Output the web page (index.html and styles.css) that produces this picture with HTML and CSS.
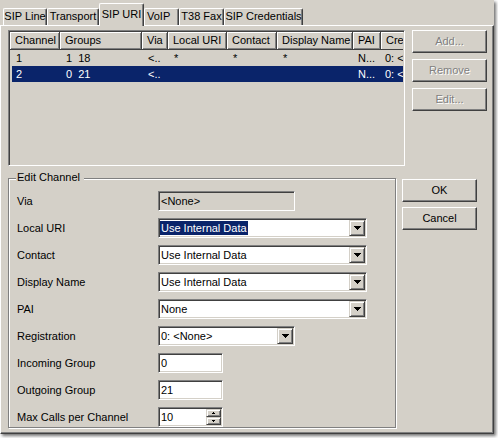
FILE: index.html
```html
<!DOCTYPE html>
<html>
<head>
<meta charset="utf-8">
<link rel="stylesheet" href="styles.css">
</head>
<body>
<div class="window">
  <div class="tabs">
    <div class="tab t1">SIP Line</div>
    <div class="tab t2">Transport</div>
    <div class="tab active t3">SIP URI</div>
    <div class="tab t4">VoIP</div>
    <div class="tab t5">T38 Fax</div>
    <div class="tab t6">SIP Credentials</div>
  </div>
  <div class="panel">
    <div class="top">
      <div class="list">
        <div class="lv-header">
          <div class="hc c1">Channel</div>
          <div class="hc c2">Groups</div>
          <div class="hc c3">Via</div>
          <div class="hc c4">Local URI</div>
          <div class="hc c5">Contact</div>
          <div class="hc c6">Display Name</div>
          <div class="hc c7">PAI</div>
          <div class="hc c8">Cre</div>
        </div>
        <div class="lv-row">
          <div class="rc c1">1</div>
          <div class="rc c2">1  18</div>
          <div class="rc c3">&lt;..</div>
          <div class="rc c4">*</div>
          <div class="rc c5">*</div>
          <div class="rc c6">*</div>
          <div class="rc c7">N...</div>
          <div class="rc c8">0: &lt;</div>
        </div>
        <div class="lv-row sel">
          <div class="rc c1">2</div>
          <div class="rc c2">0  21</div>
          <div class="rc c3">&lt;..</div>
          <div class="rc c4"></div>
          <div class="rc c5"></div>
          <div class="rc c6"></div>
          <div class="rc c7">N...</div>
          <div class="rc c8">0: &lt;</div>
        </div>
      </div>
      <div class="side">
        <div class="btn disabled">Add...</div>
        <div class="btn disabled">Remove</div>
        <div class="btn disabled">Edit...</div>
      </div>
    </div>
    <div class="bottom">
      <div class="group">
        <span class="group-label">Edit Channel</span>
        <div class="form">
          <div class="lbl">Via</div>
          <div class="edit ro w137">&lt;None&gt;</div>

          <div class="lbl">Local URI</div>
          <div class="edit combo w209"><div class="val"><span class="hl">Use Internal Data</span></div><div class="drop"><svg width="7" height="4" viewBox="0 0 7 4" shape-rendering="crispEdges"><rect x="0" y="0" width="7" height="1"/><rect x="1" y="1" width="5" height="1"/><rect x="2" y="2" width="3" height="1"/><rect x="3" y="3" width="1" height="1"/></svg></div></div>

          <div class="lbl">Contact</div>
          <div class="edit combo w209"><div class="val">Use Internal Data</div><div class="drop"><svg width="7" height="4" viewBox="0 0 7 4" shape-rendering="crispEdges"><rect x="0" y="0" width="7" height="1"/><rect x="1" y="1" width="5" height="1"/><rect x="2" y="2" width="3" height="1"/><rect x="3" y="3" width="1" height="1"/></svg></div></div>

          <div class="lbl">Display Name</div>
          <div class="edit combo w209"><div class="val">Use Internal Data</div><div class="drop"><svg width="7" height="4" viewBox="0 0 7 4" shape-rendering="crispEdges"><rect x="0" y="0" width="7" height="1"/><rect x="1" y="1" width="5" height="1"/><rect x="2" y="2" width="3" height="1"/><rect x="3" y="3" width="1" height="1"/></svg></div></div>

          <div class="lbl">PAI</div>
          <div class="edit combo w209"><div class="val">None</div><div class="drop"><svg width="7" height="4" viewBox="0 0 7 4" shape-rendering="crispEdges"><rect x="0" y="0" width="7" height="1"/><rect x="1" y="1" width="5" height="1"/><rect x="2" y="2" width="3" height="1"/><rect x="3" y="3" width="1" height="1"/></svg></div></div>

          <div class="lbl">Registration</div>
          <div class="edit combo w137"><div class="val">0: &lt;None&gt;</div><div class="drop"><svg width="7" height="4" viewBox="0 0 7 4" shape-rendering="crispEdges"><rect x="0" y="0" width="7" height="1"/><rect x="1" y="1" width="5" height="1"/><rect x="2" y="2" width="3" height="1"/><rect x="3" y="3" width="1" height="1"/></svg></div></div>

          <div class="lbl">Incoming Group</div>
          <div class="edit w65">0</div>

          <div class="lbl">Outgoing Group</div>
          <div class="edit w65">21</div>

          <div class="lbl">Max Calls per Channel</div>
          <div class="edit spin w65"><div class="val">10</div><div class="spinbtns"><div class="sb"><svg width="3" height="2" viewBox="0 0 3 2" shape-rendering="crispEdges"><rect x="1" y="0" width="1" height="1"/><rect x="0" y="1" width="3" height="1"/></svg></div><div class="sb"><svg width="3" height="2" viewBox="0 0 3 2" shape-rendering="crispEdges"><rect x="0" y="0" width="3" height="1"/><rect x="1" y="1" width="1" height="1"/></svg></div></div></div>
        </div>
      </div>
      <div class="dlg-buttons">
        <div class="btn">OK</div>
        <div class="btn">Cancel</div>
      </div>
    </div>
  </div>
</div>
</body>
</html>
```

FILE: styles.css
```css
* { box-sizing: border-box; }
html, body { margin: 0; padding: 0; }
body {
  background: #fff;
  font-family: "Liberation Sans", Arial, sans-serif;
  font-size: 11px;
  color: #000;
  width: 498px;
  height: 438px;
  overflow: hidden;
}
.window {
  width: 494px;
  height: 434px;
  background: #d4d0c8;
  box-shadow: 2px 2px 3px rgba(0, 0, 0, 0.55);
  display: flex;
  flex-direction: column;
}

/* Tabs */
.tabs {
  height: 25px;
  display: flex;
  align-items: flex-end;
  padding-left: 3px;
  position: relative;
  z-index: 1;
}
.tab {
  height: 17px;
  border-top: 1px solid #fff;
  border-left: 1px solid #fff;
  border-right: 1px solid #404040;
  box-shadow: inset -1px 0 #808080;
  border-radius: 2px 2px 0 0;
  text-align: center;
  line-height: 15px;
  white-space: nowrap;
  background: #d4d0c8;
}
.tab.active {
  height: 23px;
  margin-bottom: -1px;
  line-height: 18px;
  padding-top: 1px;
}
.t1 { width: 44px; }
.t2 { width: 52px; }
.t3 { width: 45px; }
.t4 { width: 35px; text-align: left; padding-left: 2px; }
.t5 { width: 45px; }
.t6 { width: 79px; }

/* Panel */
.panel {
  flex: 1;
  border-top: 1px solid #fff;
  border-left: 1px solid #fff;
  border-right: 1px solid #404040;
  border-bottom: 1px solid #404040;
  box-shadow: inset -1px -1px #808080;
  padding: 4px 0 0 7px;
}
.top {
  display: flex;
  gap: 7px;
}

/* List view */
.list {
  width: 397px;
  height: 136px;
  border: 1px solid;
  border-color: #808080 #fff #fff #808080;
  box-shadow: inset 1px 1px #404040, inset -1px -1px #d4d0c8;
  padding: 1px;
  overflow: hidden;
  background: #d4d0c8;
}
.lv-header {
  display: flex;
  height: 18px;
  white-space: nowrap;
}
.hc {
  flex-shrink: 0;
  height: 18px;
  border-right: 1px solid #404040;
  border-bottom: 1px solid #404040;
  box-shadow: inset 1px 1px #fff, inset -1px -1px #808080;
  padding-left: 5px;
  line-height: 16px;
  overflow: hidden;
}
.c1 { width: 50px; }
.c2 { width: 82px; }
.c3 { width: 26px; }
.c4 { width: 59px; }
.c5 { width: 50px; }
.c6 { width: 76px; }
.c7 { width: 28px; }
.c8 { width: 22px; }
.hc.c8 { border-right: 0; box-shadow: inset 1px 1px #fff; }
.lv-row {
  display: flex;
  height: 16px;
  line-height: 16px;
  white-space: pre;
}
.lv-row.sel {
  background: linear-gradient(to right, transparent 2px, #0a246a 2px);
  color: #fff;
}
.rc {
  flex-shrink: 0;
  padding-left: 6px;
  overflow: hidden;
}
.lv-row .c7 { padding-left: 5px; }
.lv-row .c8 { padding-left: 4px; }

/* Buttons */
.side {
  display: flex;
  flex-direction: column;
  gap: 6px;
}
.btn {
  width: 75px;
  height: 23px;
  background: #d4d0c8;
  border: 1px solid;
  border-color: #fff #404040 #404040 #fff;
  box-shadow: inset -1px -1px #808080;
  text-align: center;
  line-height: 20px;
}
.btn.disabled {
  color: #808080;
  text-shadow: 1px 1px 0 #fff;
}

/* Bottom */
.bottom {
  display: flex;
  gap: 6px;
  margin-top: 12px;
}
.group {
  position: relative;
  width: 388px;
  height: 250px;
  border: 1px solid #808080;
  box-shadow: inset 1px 1px #fff, 1px 1px 0 #fff;
  padding: 12px 0 0 8px;
}
.group-label {
  position: absolute;
  top: -8px;
  left: 7px;
  padding: 0 4px 0 1px;
  line-height: 13px;
  background: #d4d0c8;
}
.dlg-buttons {
  display: flex;
  flex-direction: column;
  gap: 5px;
  padding-top: 1px;
}

/* Form */
.form {
  display: grid;
  grid-template-columns: 141px auto;
  grid-auto-rows: 20px;
  row-gap: 7px;
  align-items: center;
  justify-items: start;
}
.lbl { white-space: nowrap; }
.edit {
  height: 20px;
  border: 1px solid;
  border-color: #808080 #fff #fff #808080;
  box-shadow: inset 1px 1px #404040, inset -1px -1px #d4d0c8;
  padding: 1px 1px 1px 2px;
  background: #fff;
  line-height: 16px;
  white-space: nowrap;
}
.edit.ro { background: #d4d0c8; }
.w137 { width: 137px; }
.w209 { width: 209px; }
.w65 { width: 65px; }
.combo, .spin {
  display: flex;
  padding-left: 1px;
}
.val {
  flex: 1;
  padding-left: 1px;
  overflow: hidden;
}
.hl {
  display: inline-block;
  height: 14px;
  line-height: 14px;
  margin: 1px 0 0 -1px;
  padding: 0 1px;
  background: #0a246a;
  color: #fff;
  vertical-align: top;
}
.drop {
  width: 16px;
  height: 16px;
  background: #d4d0c8;
  border: 1px solid;
  border-color: #d4d0c8 #404040 #404040 #d4d0c8;
  box-shadow: inset 1px 1px #fff, inset -1px -1px #808080;
  display: flex;
  align-items: center;
  justify-content: center;
}
.drop svg, .sb svg { fill: #000; display: block; }
.spinbtns {
  width: 15px;
  display: flex;
  flex-direction: column;
}
.sb {
  height: 8px;
  background: #d4d0c8;
  border: 1px solid;
  border-color: #d4d0c8 #404040 #404040 #d4d0c8;
  box-shadow: inset 1px 1px #fff, inset -1px -1px #808080;
  display: flex;
  align-items: center;
  justify-content: center;
}
```
